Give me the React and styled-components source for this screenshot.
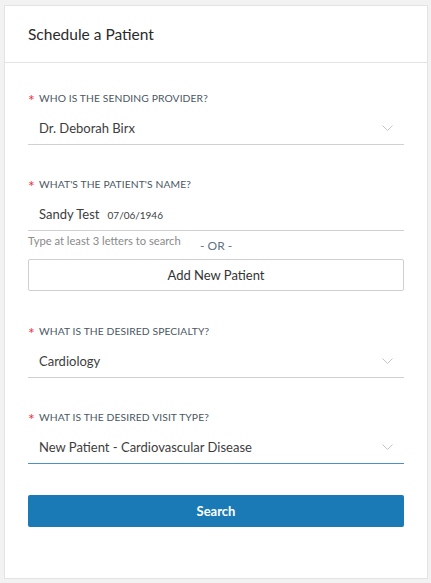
import React from "react";
import styled, { createGlobalStyle } from "styled-components";

const GlobalStyle = createGlobalStyle`
  body {
    margin: 0;
    background: #f2f2f2;
    font-family: Lato, "Open Sans", sans-serif;
    color: #333;
  }
`;

const Card = styled.div`
  margin: 5px 3px 0 4px;
  height: 574px;
  box-sizing: border-box;
  background: #fff;
  border: 1px solid #e3e3e3;
`;

const Header = styled.div`
  height: 56px;
  display: flex;
  align-items: center;
  padding: 0 23px;
  border-bottom: 1px solid #e3e3e3;
  font-size: 15.5px;
  color: #2b2b2b;
`;

const Body = styled.div`
  padding: 28px 23px 0;
  display: flex;
  flex-direction: column;
`;

const Field = styled.div`
  display: flex;
  flex-direction: column;
  margin-top: ${({ $top }) => $top || 0}px;
`;

const Label = styled.div`
  font-size: 10.3px;
  color: #4a5763;
  letter-spacing: 0.1px;
  height: 14px;
  display: flex;
  align-items: center;
  gap: 4px;

  & span {
    color: #f0313f;
    font-size: 16px;
    line-height: 10px;
    margin-top: 3px;
  }
`;

const SelectBox = styled.div`
  height: 33px;
  margin-top: 7px;
  box-sizing: border-box;
  padding: 0 11px;
  display: flex;
  align-items: center;
  justify-content: space-between;
  border-bottom: 1px solid ${({ $active }) => ($active ? "#4b90c6" : "#d0d0d0")};
  font-size: 13px;
  color: #3d3d3d;
`;

const DateText = styled.span`
  font-size: 10px;
  margin-left: 8px;
`;

const HintRow = styled.div`
  display: flex;
  align-items: flex-start;
  height: 28px;
`;

const Hint = styled.div`
  font-size: 11.2px;
  color: #8a8a8a;
  margin-top: 3px;
  width: 172px;
`;

const Or = styled.div`
  font-size: 12px;
  color: #5f7282;
  margin-top: 7px;
`;

const OutlineButton = styled.button`
  height: 32px;
  width: 100%;
  background: #fff;
  border: 1px solid #cfcfcf;
  border-radius: 2px;
  font-family: inherit;
  font-size: 13px;
  color: #333;
`;

const PrimaryButton = styled.button`
  margin-top: 31px;
  height: 32px;
  width: 100%;
  background: #1a7ab5;
  border: none;
  border-radius: 2px;
  font-family: inherit;
  font-size: 13px;
  font-weight: 700;
  color: #fff;
`;

const Chevron = () => (
  <svg width="11" height="7" viewBox="0 0 11 7">
    <path d="M0.5 0.5 L5.5 5.5 L10.5 0.5" fill="none" stroke="#c4c4c4" strokeWidth="1" />
  </svg>
);

const Select = ({ value, active }) => (
  <SelectBox $active={active}>
    <span>{value}</span>
    <Chevron />
  </SelectBox>
);

export default function App() {
  return (
    <>
      <GlobalStyle />
      <Card>
        <Header>Schedule a Patient</Header>
        <Body>
          <Field>
            <Label><span>*</span>WHO IS THE SENDING PROVIDER?</Label>
            <Select value="Dr. Deborah Birx" />
          </Field>
          <Field $top={32}>
            <Label><span>*</span>WHAT'S THE PATIENT'S NAME?</Label>
            <SelectBox>
              <span>
                Sandy Test<DateText>07/06/1946</DateText>
              </span>
            </SelectBox>
            <HintRow>
              <Hint>Type at least 3 letters to search</Hint>
              <Or>- OR -</Or>
            </HintRow>
            <OutlineButton>Add New Patient</OutlineButton>
          </Field>
          <Field $top={33}>
            <Label><span>*</span>WHAT IS THE DESIRED SPECIALTY?</Label>
            <Select value="Cardiology" />
          </Field>
          <Field $top={32}>
            <Label><span>*</span>WHAT IS THE DESIRED VISIT TYPE?</Label>
            <Select value="New Patient - Cardiovascular Disease" active />
          </Field>
          <PrimaryButton>Search</PrimaryButton>
        </Body>
      </Card>
    </>
  );
}
